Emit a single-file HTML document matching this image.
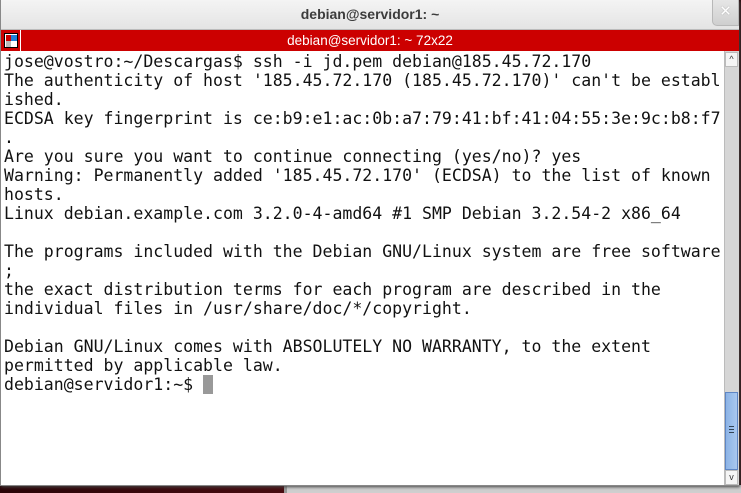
<!DOCTYPE html>
<html><head><meta charset="utf-8"><style>
*{margin:0;padding:0;box-sizing:border-box}
body{width:741px;height:493px;overflow:hidden;background:#2a0a0c;position:relative;font-family:"Liberation Sans",sans-serif}
#bot{position:absolute;left:0;top:485px;width:741px;height:8px;background:linear-gradient(90deg,#2a0508,#4a0d12 40%,#3a0a0e 70%)}
#bot2{position:absolute;left:284px;top:485px;width:457px;height:8px;background:#cfcfcf;border-left:3px solid #999}
#win{position:absolute;left:0;top:0;width:739px;height:486px;background:#fff;border:1px solid #888;border-top:none;box-shadow:1px 1px 3px #444}
#title{position:absolute;left:0;top:0;width:738px;height:30px;background:linear-gradient(#f4f4f4,#e4e4e4);border-bottom:1px solid #bbb;text-align:center;font-weight:bold;font-size:14px;line-height:29px;color:#3c3c3c}
#close{position:absolute;left:711px;top:0;width:27px;height:26px;background:linear-gradient(#e6e6e6,#cfcfcf);border:1px solid #b8b8b8;border-top:none;border-radius:0 0 0 5px;color:#fff;font-size:15px;line-height:24px;text-align:center;text-shadow:0 0 1px #888}
#red{position:absolute;left:0;top:30px;width:738px;height:21px;background:#cc0000;color:#fff;font-size:13.5px;line-height:21px;text-align:center}
#sep{position:absolute;left:19px;top:30px;width:1px;height:21px;background:#fff}
#ico{position:absolute;left:3px;top:33px;width:14px;height:15px;border:1px solid #000;background:#fff}
#term{position:absolute;left:3px;top:52px;font-family:"DejaVu Sans Mono",monospace;font-size:16.55px;line-height:19px;color:#111;white-space:pre}
#sb{position:absolute;left:723px;top:51px;width:15px;height:434px;background:#d6d6d6;border-left:1px solid #bbb}
#thumb{position:absolute;left:724px;top:392px;width:13px;height:78px;background:linear-gradient(90deg,#8cb3e6,#a9c8ef);border:1px solid #5e86c4}
.arr{position:absolute;left:724px;width:13px;height:15px;background:#f5f5f5;border:1px solid #bbb;font-size:9px;text-align:center;line-height:13px;color:#333}
.cur{background:#999;color:#999}
</style></head><body>
<div id="bot"></div><div id="bot2"></div>
<div id="win">
<div id="title">debian@servidor1: ~</div>
<div id="close">✕</div>
<div id="red">debian@servidor1: ~ 72x22</div>
<div id="sep"></div>
<div id="ico"><div style="position:absolute;left:1px;top:1px;width:5px;height:6px;background:#c00"></div><div style="position:absolute;left:6px;top:1px;width:6px;height:6px;background:#1e7fd8"></div><div style="position:absolute;left:1px;top:7px;width:5px;height:6px;background:#bbb"></div></div>
<div id="term">jose@vostro:~/Descargas$ ssh -i jd.pem debian@185.45.72.170
The authenticity of host '185.45.72.170 (185.45.72.170)' can't be establ
ished.
ECDSA key fingerprint is ce:b9:e1:ac:0b:a7:79:41:bf:41:04:55:3e:9c:b8:f7
.
Are you sure you want to continue connecting (yes/no)? yes
Warning: Permanently added '185.45.72.170' (ECDSA) to the list of known 
hosts.
Linux debian.example.com 3.2.0-4-amd64 #1 SMP Debian 3.2.54-2 x86_64

The programs included with the Debian GNU/Linux system are free software
;
the exact distribution terms for each program are described in the
individual files in /usr/share/doc/*/copyright.

Debian GNU/Linux comes with ABSOLUTELY NO WARRANTY, to the extent
permitted by applicable law.
debian@servidor1:~$ <span class="cur"> </span></div>
<div id="sb"></div>
<div class="arr" style="top:52px">^</div>
<div id="thumb"><div style="position:absolute;left:3px;top:33px;width:5px;height:7px;border-top:1px solid #345;border-bottom:1px solid #345"><div style="margin-top:2px;height:1px;background:#345"></div></div></div>
<div class="arr" style="top:470px">v</div>
</div>
</body></html>
